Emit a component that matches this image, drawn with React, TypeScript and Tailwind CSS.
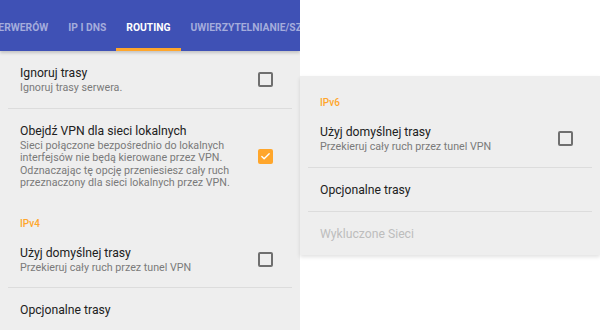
import { Check } from 'lucide-react';

type Item = { title: string; sub?: string; checked?: boolean; box?: boolean; disabled?: boolean };

function Checkbox({ checked }: { checked?: boolean }) {
  if (checked) {
    return (
      <div className="w-[15px] h-[15px] rounded-[2px] bg-[#ffa62b] flex items-center justify-center shrink-0">
        <Check className="w-[11px] h-[11px] text-white" strokeWidth={3} />
      </div>
    );
  }
  return <div className="w-[15px] h-[15px] rounded-[2px] border-2 border-[#6f6f6f] shrink-0" />;
}

function Row({ item, divider }: { item: Item; divider?: boolean }) {
  return (
    <div>
      <div className="flex items-center pl-5 pr-[27px] pt-[14px] pb-[13px]">
        <div className="flex-1 min-w-0">
          <div className={`text-[12.2px] leading-4 ${item.disabled ? 'text-[#bdbdbd]' : 'text-[#212121]'}`}>{item.title}</div>
          {item.sub && <div className="text-[10.7px] leading-[12.5px] text-[#7a7a7a] pr-6 mt-[1px]">{item.sub}</div>}
        </div>
        {item.box && <Checkbox checked={item.checked} />}
      </div>
      {divider && <div className="mx-2 h-px bg-[#dcdcdc]" />}
    </div>
  );
}

function Header({ label, top }: { label: string; top: string }) {
  return <div className={`pl-5 ${top} text-[10px] leading-[14px] font-medium text-[#ffa62b]`}>{label}</div>;
}

const tabs = ['SERWERÓW', 'IP I DNS', 'ROUTING', 'UWIERZYTELNIANIE/SZYFROWANIE'];

export default function App() {
  return (
    <div className="w-[600px] h-[330px] flex overflow-hidden bg-white" style={{ fontFamily: 'Roboto, "Noto Sans", sans-serif' }}>
      {/* Left: routing tab */}
      <div className="w-[300px] h-full bg-[#eeeeee] flex flex-col overflow-hidden">
        <div className="h-[51px] bg-[#3f51b5] flex items-stretch shadow-[0_2px_3px_rgba(0,0,0,0.18)] z-10 shrink-0 overflow-hidden">
          <div className="flex -ml-[18px] whitespace-nowrap">
            {tabs.map((t) => (
              <div key={t} className="relative px-[10px] flex items-center pt-[4px] text-[10.3px] font-bold">
                <span className={t === 'ROUTING' ? 'text-white' : 'text-[#a4acdc]'}>{t}</span>
                {t === 'ROUTING' && <div className="absolute left-0 right-0 bottom-0 h-[3px] bg-[#ffa62b]" />}
              </div>
            ))}
          </div>
        </div>
        <div className="flex-1">
          <Row item={{ title: 'Ignoruj trasy', sub: 'Ignoruj trasy serwera.', box: true }} divider />
          <Row
            item={{
              title: 'Obejdź VPN dla sieci lokalnych',
              sub: 'Sieci połączone bezpośrednio do lokalnych interfejsów nie będą kierowane przez VPN. Odznaczając tę opcję przeniesiesz cały ruch przeznaczony dla sieci lokalnych przez VPN.',
              box: true,
              checked: true,
            }}
          />
          <Header label="IPv4" top="pt-[14px]" />
          <Row item={{ title: 'Użyj domyślnej trasy', sub: 'Przekieruj cały ruch przez tunel VPN', box: true }} divider />
          <Row item={{ title: 'Opcjonalne trasy' }} divider />
        </div>
      </div>

      {/* Right: IPv6 card */}
      <div className="flex-1 h-full bg-white pt-[76px]">
        <div className="bg-[#eeeeee] shadow-[0_2px_4px_rgba(0,0,0,0.12)]">
          <Header label="IPv6" top="pt-5" />
          <Row item={{ title: 'Użyj domyślnej trasy', sub: 'Przekieruj cały ruch przez tunel VPN', box: true }} divider />
          <Row item={{ title: 'Opcjonalne trasy' }} divider />
          <Row item={{ title: 'Wykluczone Sieci', disabled: true }} />
        </div>
      </div>
    </div>
  );
}
